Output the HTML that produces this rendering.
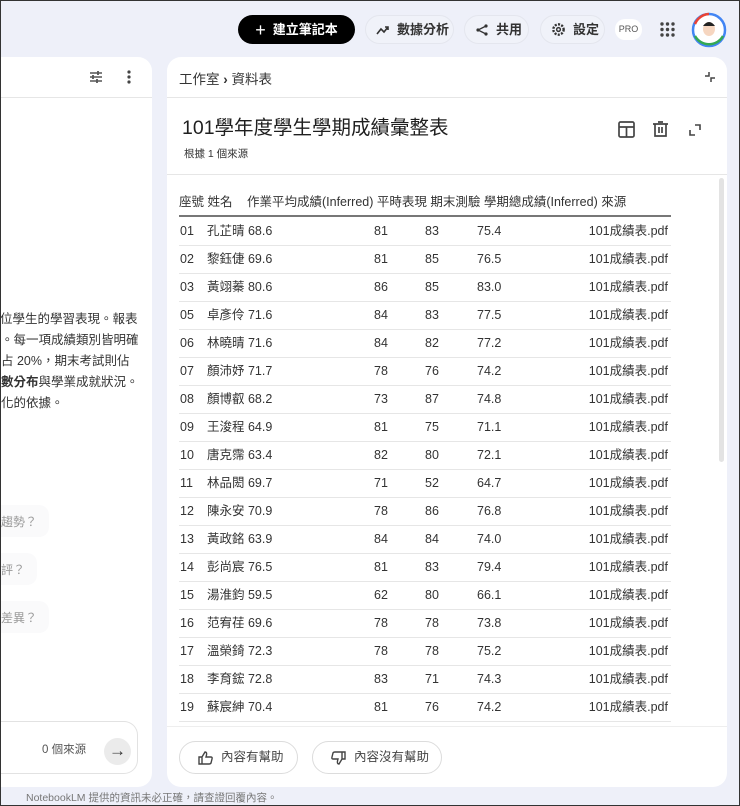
<!DOCTYPE html>
<html><head><meta charset="utf-8"><style>
*{box-sizing:border-box;margin:0;padding:0}
body{width:740px;height:806px;overflow:hidden;background:#eef0f9;font-family:"Liberation Sans","Noto Sans CJK TC",sans-serif;color:#1f1f1f;position:relative;border:1px solid #333}
.abs{position:absolute}
.btn{position:absolute;top:14px;height:29px;border-radius:15px;background:#f0f2f9;border:1px solid #e4e6ee;font-size:13px;display:flex;align-items:center;gap:7px;padding:0 10px;font-weight:bold;color:#333;white-space:nowrap;line-height:1}
.btn svg{flex-shrink:0}
.panel{position:absolute;background:#fff;border-radius:14px}
.t{font-size:12.5px;color:#333}
.row{position:absolute;left:178px;width:492px;height:28px;border-bottom:1px solid #e6e6e6;font-size:12.5px;color:#333}
.row span{position:absolute;top:0;line-height:27px;white-space:nowrap}
.chip{position:absolute;left:0;height:32px;background:#fafafb;border-radius:0 10px 10px 0;font-size:12px;color:#999;padding:8px 10px 0 0}
.fb{position:absolute;top:740px;height:33px;border:1px solid #dcdcdc;border-radius:17px;font-size:12.5px;color:#444;display:flex;align-items:center;gap:8px;padding:0 18px;white-space:nowrap;line-height:1}
.fb svg{flex-shrink:0}
</style></head><body>
<div class="btn" style="left:237px;width:117px;background:#000;color:#fff;border:none;justify-content:center"><span style="font-size:18px;font-weight:normal">+</span>建立筆記本</div>
<div class="btn" style="left:364px;width:89px"><svg width="14" height="14" viewBox="0 0 14 14"><path d="M1 11 L5 6 L8 9 L12 4 M9 4 H12 V7" stroke="#333" stroke-width="1.6" fill="none"/></svg>數據分析</div>
<div class="btn" style="left:463px;width:65px"><svg width="14" height="14" viewBox="0 0 14 14"><circle cx="11" cy="3" r="1.6" fill="#333"/><circle cx="3" cy="7" r="1.6" fill="#333"/><circle cx="11" cy="11" r="1.6" fill="#333"/><path d="M11 3 L3 7 L11 11" stroke="#333" stroke-width="1.3" fill="none"/></svg>共用</div>
<div class="btn" style="left:539px;width:65px"><svg width="15" height="15" viewBox="0 0 16 16"><circle cx="8" cy="8" r="5.5" stroke="#333" stroke-width="2.5" fill="none" stroke-dasharray="2.2 1.4"/><circle cx="8" cy="8" r="2" stroke="#333" stroke-width="1.5" fill="none"/></svg>設定</div>
<div class="abs" style="left:614px;top:18px;width:27px;height:21px;background:#fff;border-radius:10px;font-size:9px;color:#555;text-align:center;line-height:21px">PRO</div>
<svg class="abs" style="left:659px;top:21px" width="15" height="15"><g fill="#444"><circle cx="2" cy="2" r="1.7"/><circle cx="7.5" cy="2" r="1.7"/><circle cx="13" cy="2" r="1.7"/><circle cx="2" cy="7.5" r="1.7"/><circle cx="7.5" cy="7.5" r="1.7"/><circle cx="13" cy="7.5" r="1.7"/><circle cx="2" cy="13" r="1.7"/><circle cx="7.5" cy="13" r="1.7"/><circle cx="13" cy="13" r="1.7"/></g></svg>
<svg class="abs" style="left:690px;top:11px" width="36" height="36"><circle cx="18" cy="18" r="16" fill="#fff" stroke="#4285f4" stroke-width="2.5"/><path d="M4 24 A16 16 0 0 0 32 24" stroke="#34a853" stroke-width="2.5" fill="none"/><path d="M4 12 A16 16 0 0 1 18 2" stroke="#ea4335" stroke-width="2.5" fill="none"/><ellipse cx="18" cy="17" rx="6" ry="7" fill="#f6d6c0"/><path d="M12 14 Q18 6 24 14" fill="#222"/></svg>

<div class="panel" style="left:0;top:56px;width:151px;height:730px;border-radius:0 14px 14px 0">
<div style="height:41px;border-bottom:1px solid #e6e6e6"></div>
<svg class="abs" style="left:88px;top:13px" width="14" height="14"><path d="M1 3H13M1 7H13M1 11H13" stroke="#555" stroke-width="1.5"/><path d="M9 1V5M4 5V9M8 9V13" stroke="#555" stroke-width="1.8"/></svg>
<svg class="abs" style="left:126px;top:13px" width="4" height="14"><circle cx="2" cy="2" r="1.6" fill="#444"/><circle cx="2" cy="7" r="1.6" fill="#444"/><circle cx="2" cy="12" r="1.6" fill="#444"/></svg>
<div class="abs t" style="left:0;top:252px;line-height:21px;font-size:12.5px;white-space:nowrap;width:151px;overflow:hidden">
<div style="margin-left:-1px">位學生的學習表現。報表</div><div>。每一項成績類別皆明確</div><div>占 20%，期末考試則佔</div><div><b>數分布</b>與學業成就狀況。</div><div>化的依據。</div></div>
<div class="chip" style="top:448px;width:48px">趨勢？</div>
<div class="chip" style="top:496px;width:36px">評？</div>
<div class="chip" style="top:544px;width:48px">差異？</div>
<div class="abs" style="left:0;top:664px;width:137px;height:53px;border:1px solid #e2e2e2;border-left:none;border-radius:0 14px 14px 0"></div>
<div class="abs" style="left:41px;top:684px;font-size:11.5px;color:#555">0 個來源</div>
<div class="abs" style="left:103px;top:681px;width:27px;height:27px;border-radius:50%;background:#ebebeb;font-size:17px;text-align:center;line-height:26px;color:#333">→</div>
</div>

<div class="panel" style="left:166px;top:56px;width:560px;height:730px">
<div style="height:41px;border-bottom:1px solid #e6e6e6"></div>
<div class="abs" style="left:12px;top:11px;font-size:13.5px;color:#333">工作室 <span style="font-weight:bold">›</span> 資料表</div>
<svg class="abs" style="left:537px;top:14px" width="12" height="12"><path d="M1 5H5V1M11 7H7V11" stroke="#444" stroke-width="1.5" fill="none"/></svg>
<div class="abs" style="left:15px;top:59px;font-size:19.5px;line-height:24px;color:#1f1f1f">101學年度學生學期成績彙整表</div>
<div class="abs" style="left:17px;top:89px;font-size:10.5px;color:#333">根據 1 個來源</div>
<svg class="abs" style="left:451px;top:64px" width="17" height="17"><rect x="1" y="1" width="15" height="15" rx="1.5" stroke="#444" stroke-width="1.7" fill="none"/><path d="M1 6H16M8.5 6V16" stroke="#444" stroke-width="1.7"/></svg>
<svg class="abs" style="left:486px;top:64px" width="15" height="17"><path d="M0 3H15M5 1H10M2 3V15H13V3M6 6V12M9 6V12" stroke="#444" stroke-width="1.7" fill="none"/></svg>
<svg class="abs" style="left:522px;top:67px" width="12" height="12"><path d="M6 1H11V6M1 6V11H6" stroke="#444" stroke-width="1.6" fill="none"/></svg>
<div class="abs" style="left:0;top:117px;width:560px;border-top:1px solid #e6e6e6"></div>
<div class="abs" style="left:552px;top:121px;width:5px;height:284px;background:#e3e3e3;border-radius:3px"></div>
</div>

<div class="abs" style="left:178px;top:192px;font-size:12.5px;color:#333;white-space:nowrap;line-height:18px">座號 姓名<span style="position:absolute;left:68px">作業平均成績(Inferred) 平時表現 期末測驗 學期總成績(Inferred) 來源</span></div>
<div class="abs" style="left:178px;top:214px;width:492px;height:2px;background:#777"></div>

<div id="rows"></div>
<script>
var d=[["01","孔芷晴 68.6",81,83,"75.4"],["02","黎鈺倢 69.6",81,85,"76.5"],["03","黃翊蓁 80.6",86,85,"83.0"],["05","卓彥伶 71.6",84,83,"77.5"],["06","林曉晴 71.6",84,82,"77.2"],["07","顏沛妤 71.7",78,76,"74.2"],["08","顏博叡 68.2",73,87,"74.8"],["09","王浚程 64.9",81,75,"71.1"],["10","唐克霈 63.4",82,80,"72.1"],["11","林品閎 69.7",71,52,"64.7"],["12","陳永安 70.9",78,86,"76.8"],["13","黃政銘 63.9",84,84,"74.0"],["14","彭尚宸 76.5",81,83,"79.4"],["15","湯淮鈞 59.5",62,80,"66.1"],["16","范宥荏 69.6",78,78,"73.8"],["17","溫榮錡 72.3",78,78,"75.2"],["18","李育鋐 72.8",83,71,"74.3"],["19","蘇宸紳 70.4",81,76,"74.2"]];
var h="";d.forEach(function(r,i){h+='<div class="row" style="top:'+(217+i*28)+'px"><span style="left:1px">'+r[0]+'</span><span style="left:28px">'+r[1]+'</span><span style="left:195px">'+r[2]+'</span><span style="left:246px">'+r[3]+'</span><span style="left:298px">'+r[4]+'</span><span style="right:3px">101成績表.pdf</span></div>';});
document.getElementById("rows").innerHTML=h;
</script>
<div class="abs" style="left:166px;top:724px;width:560px;height:2px;background:#fff"></div>
<div class="abs" style="left:166px;top:725px;width:560px;border-top:1px solid #eee"></div>
<div class="fb" style="left:178px;width:119px"><svg width="15" height="14"><path d="M1 6H4V13H1ZM4 6L7 1Q9 1 8.5 4L8 6H13Q14.5 6 14 8L13 12Q12.5 13 11 13H4" stroke="#444" stroke-width="1.4" fill="none"/></svg>內容有幫助</div>
<div class="fb" style="left:311px;width:130px"><svg width="15" height="14"><g transform="rotate(180 7.5 7)"><path d="M1 6H4V13H1ZM4 6L7 1Q9 1 8.5 4L8 6H13Q14.5 6 14 8L13 12Q12.5 13 11 13H4" stroke="#444" stroke-width="1.4" fill="none"/></g></svg>內容沒有幫助</div>
<div class="abs" style="left:25px;top:789px;font-size:10.5px;color:#777">NotebookLM 提供的資訊未必正確，請查證回覆內容。</div>
</body></html>
